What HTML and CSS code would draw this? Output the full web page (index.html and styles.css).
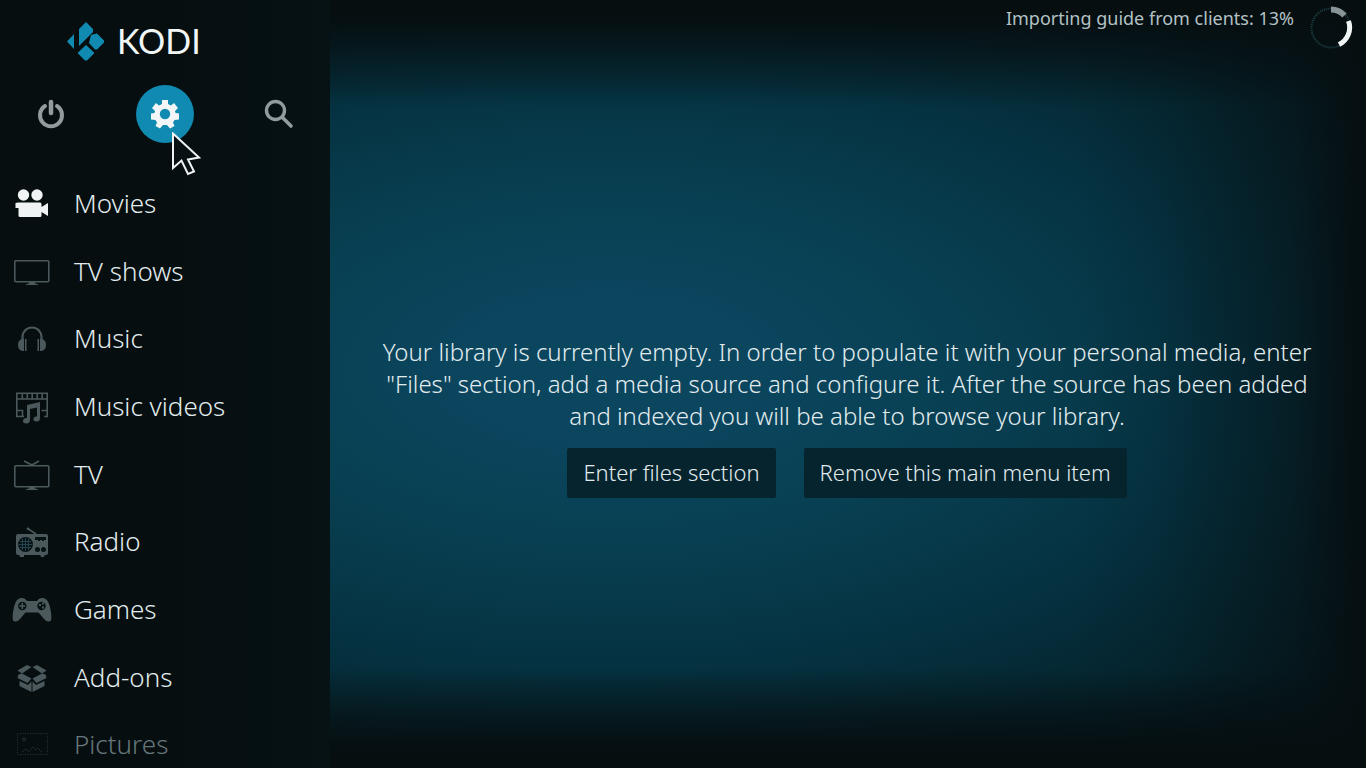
FILE: index.html
```html
<!DOCTYPE html>
<html lang="en">
<head>
<meta charset="utf-8">
<title>Kodi</title>
<link rel="stylesheet" href="styles.css">
</head>
<body>
<div class="app">
  <aside class="sidebar">
    <header class="brand">
      <svg class="brand-mark" viewBox="0 0 38 40" aria-hidden="true">
        <path d="M19 1l7 7v3L12 25V8zM7 13v15L0 20.500zM24 14l6-1.500 7 7v2l-7 7h-2l-6-6.500zM19 24l8 7.500v1L20 39.500h-2L11 32.500v-1z"/>
      </svg>
      <span class="brand-name">KODI</span>
    </header>
    <div class="actions">
      <button class="action" type="button" aria-label="Power">
        <svg viewBox="0 0 30 30" fill="none" stroke="currentColor" stroke-linecap="round">
          <path d="M15 3v11" stroke-width="4.500"/>
          <path d="M9 7A11 11 0 1 0 21 7" stroke-width="4"/>
        </svg>
      </button>
      <button class="action action-active" type="button" aria-label="Settings">
        <svg viewBox="0 0 30 30">
          <path fill="currentColor" fill-rule="evenodd" d="M12 1h6v4l3 1.500L24 4l4 5-3 3 .5 2 3.500.500v6l-4.500.500-1.500 2.500 1.500 3.500-4.500 2.500-3-3.500h-4l-3 3.500L5.500 27 7 23.500 5.500 21 1 20.500v-6l3.500-.500.5-2L2 9l4-5 3 2.500L12 5zM15 9.800a5.200 5.200 0 1 0 0 10.400a5.200 5.200 0 0 0 0-10.400z"/>
        </svg>
      </button>
      <button class="action" type="button" aria-label="Search">
        <svg viewBox="0 0 30 30" fill="none" stroke="currentColor" stroke-linecap="round">
          <circle cx="11.500" cy="11.500" r="9" stroke-width="3.400"/>
          <path d="M18.500 18.500l8.500 8.500" stroke-width="3.600"/>
        </svg>
      </button>
      <svg class="pointer" viewBox="0 0 30 44" aria-hidden="true">
        <path d="M2 1.500V36l8.500-7.500L17 42l6-2.500-6-12 11-2z"/>
      </svg>
    </div>
    <nav class="menu" aria-label="Main menu">
      <a class="menu-item menu-item-selected" href="#movies">
        <svg class="menu-icon" viewBox="0 0 40 40" fill="currentColor"><circle cx="11.500" cy="12" r="5.700"/><circle cx="25" cy="12" r="5.700"/><path d="M6 19.500h22q1.500 0 1.500 2V24l6.500-4v13l-6.500-4v3.500q0 1.500-1.500 1.500H8q-1.500 0-1.500-1.500V25H3.500v-5z"/></svg>
        <span>Movies</span>
      </a>
      <a class="menu-item" href="#tvshows">
        <svg class="menu-icon" viewBox="0 0 40 40"><rect x="2.800" y="9.800" width="34" height="21" rx="1" fill="none" stroke="currentColor" stroke-width="1.600"/><path fill="currentColor" d="M17 31h6v1.500l3 .8V34H14v-.7l3-.8z"/></svg>
        <span>TV shows</span>
      </a>
      <a class="menu-item" href="#music">
        <svg class="menu-icon" viewBox="0 -1 40 40"><path d="M10.500 23v-5a9.500 9.500 0 0 1 19 0v5" fill="none" stroke="currentColor" stroke-width="2.200"/><path fill="currentColor" d="M12 19.500v12.500q-6 0-6-6t6-6.500zM13 20h1.500v12H13zM28 19.500v12.500q6 0 6-6t-6-6.500zM25.500 20H27v12h-1.500z"/></svg>
        <span>Music</span>
      </a>
      <a class="menu-item" href="#musicvideos">
        <svg class="menu-icon" viewBox="0 -1 40 40"><path d="M12 29.500H4.800V6.300h30.400v23.200h-3M4.800 12h30.400M10.300 6.300V12M15.300 6.300V12M20.200 6.300V12M25.200 6.300V12M30.200 6.300V12M5 23.500h5.500v5.500M35 23.500h-5.500" fill="none" stroke="currentColor" stroke-width="1.600"/><path fill="currentColor" d="M15 18l13-3v16q0 3.500-3.500 3.500t-3-3q.5-2.500 3.500-2v-9l-7 1.600v10.400q0 4-3.700 4T11 33.500q.5-3 4-2.500z"/></svg>
        <span>Music videos</span>
      </a>
      <a class="menu-item" href="#tv">
        <svg class="menu-icon" viewBox="0 -1 40 40"><rect x="2.800" y="10.800" width="34" height="21" rx="1" fill="none" stroke="currentColor" stroke-width="1.600"/><path d="M20 10l-8-4M20 10l7-4" fill="none" stroke="currentColor" stroke-width="1.600"/><path fill="currentColor" d="M17 32h6v1.500l3 .8V35H14v-.7l3-.8z"/></svg>
        <span>TV</span>
      </a>
      <a class="menu-item" href="#radio">
        <svg class="menu-icon" viewBox="0 -1 40 40"><path d="M24 12L15.500 6.500" stroke="currentColor" stroke-width="1.500"/><circle cx="16" cy="6.800" r="1.400" fill="currentColor"/><rect x="4" y="12" width="32" height="21" rx="2" fill="currentColor"/><path d="M7 32h5v3H8zM28 32h5l-1 3h-3z" fill="currentColor"/><circle cx="13.500" cy="22.500" r="7.500" class="cut"/><path class="cut" d="M23 15h11v3h-2v1h-2v-1h-2v1h-2v-1h-3z"/><circle cx="25.500" cy="27.500" r="2.500" class="cut"/><circle cx="31.500" cy="27.500" r="2.500" class="cut"/><path class="mesh" d="M8 19.500h11M6.500 22.500h14M8 25.500h11M10.500 17v11M13.500 16v13M16.500 17v11"/></svg>
        <span>Radio</span>
      </a>
      <a class="menu-item" href="#games">
        <svg class="menu-icon" viewBox="0 -1 40 40"><path fill="currentColor" d="M9 8q4-.5 6 3h10q2-3.500 6-3 5 .5 7 9 2.500 12 .5 14-3.500 1.500-6-1.500l-6-7H13.500l-6 7Q5 32.500 1.500 31q-2-2 .5-14Q4 8.500 9 8z"/><circle cx="10.300" cy="16" r="4.200" class="cut"/><path d="M10.300 13v6M7.300 16h6" stroke="currentColor" stroke-width="1.600"/><circle cx="29.500" cy="16" r="4.200" class="cut"/><path fill="currentColor" d="M27 14h2v2h-2zM30 12.500h2v2h-2zM30 16.500h2v2h-2z"/></svg>
        <span>Games</span>
      </a>
      <a class="menu-item" href="#addons">
        <svg class="menu-icon" viewBox="0 -1 40 40" fill="currentColor"><path d="M5.500 12.500L15 7l4.500 2-9.500 6.500zM34.500 12.500L25 7l-4.500 2 9.500 6.500zM6.500 16.500L10 15.500l9.500 5L15.500 25 5.500 20zM33.500 16.500L30 15.500l-9.500 5L24.500 25l10-5zM7.500 23l8.500 4 3.500-3.500V34l-12-6zM32.500 23L24 27l-3.500-3.500V34l12-6z"/></svg>
        <span>Add-ons</span>
      </a>
      <a class="menu-item menu-item-fading" href="#pictures">
        <svg class="menu-icon" viewBox="0 -1 40 40" fill="none" stroke="currentColor"><rect x="5.500" y="8.500" width="30" height="21" stroke-dasharray="1 1.500"/><circle cx="12" cy="14.500" r="1.500"/><path d="M10 27l4-3 3 3 4-5 3 3 2-2 4 4" stroke-dasharray="2 1"/></svg>
        <span>Pictures</span>
      </a>
    </nav>
  </aside>
  <main class="content">
    <div class="status" role="status">
      <span class="status-text">Importing guide from clients: 13%</span>
      <svg class="spinner" viewBox="0 0 44 44" fill="none" aria-hidden="true">
        <circle class="spinner-track" cx="22" cy="22" r="19.500"/>
        <path class="spinner-tail" d="M22 3.500a18.500 18.500 0 0 1 13.500 6"/>
        <path class="spinner-head" d="M39.500 15A19 19 0 0 1 30 38.500"/>
      </svg>
    </div>
    <section class="empty">
      <p class="empty-text">Your library is currently empty. In order to populate it with your personal media, enter "Files" section, add a media source and configure it. After the source has been added and indexed you will be able to browse your library.</p>
      <div class="empty-actions">
        <button class="box-button" type="button">Enter files section</button>
        <button class="box-button" type="button">Remove this main menu item</button>
      </div>
    </section>
  </main>
</div>
</body>
</html>
```

FILE: styles.css
```css
* {
  box-sizing: border-box;
}

body {
  margin: 0;
  background: #060e10;
  color: #e2ecee;
  font-family: "Noto Sans", sans-serif;
}

button {
  border: 0;
  font: inherit;
  color: inherit;
}

.app {
  display: grid;
  grid-template-columns: 330px 1fr;
  height: 100vh;
  min-height: 640px;
  overflow: hidden;
}

.sidebar {
  display: flex;
  flex-direction: column;
  min-height: 0;
  background: linear-gradient(90deg, #060e10 50%, #061214);
}

.brand {
  display: flex;
  align-items: center;
  gap: 12px;
  height: 81px;
  padding-left: 67px;
}

.brand-mark {
  width: 38px;
  height: 40px;
  fill: #118ab2;
}

.brand-name {
  font-family: Lato, sans-serif;
  font-size: 34px;
  line-height: 40px;
  color: #f2f6f7;
}

.actions {
  position: relative;
  display: flex;
  justify-content: space-between;
  padding: 4px 22px 0;
  height: 88px;
}

.action {
  display: grid;
  place-items: center;
  width: 58px;
  height: 58px;
  padding: 0;
  border-radius: 50%;
  background: none;
  color: #929b9d;
}

.action svg {
  width: 30px;
  height: 30px;
}

.action-active {
  background: #108ab0;
  color: #f2f6f7;
}

.pointer {
  position: absolute;
  left: 171px;
  top: 51px;
  width: 30px;
  height: 44px;
  fill: #071114;
  stroke: #eef2f3;
  stroke-width: 2;
}

.menu {
  display: flex;
  flex: 1;
  flex-direction: column;
  margin-bottom: -10px;
}

.menu-item {
  display: flex;
  flex: 1;
  align-items: center;
  gap: 22px;
  padding-left: 12px;
  color: #e2ecee;
  font-size: 26px;
  font-weight: 300;
  line-height: 36px;
  text-decoration: none;
}

.menu-icon {
  width: 40px;
  height: 40px;
  color: #4b585c;
}

.menu-item-selected .menu-icon {
  color: #f0f3f4;
}

.menu-item-fading {
  color: #66777c;
}

.menu-item-fading .menu-icon {
  color: #26343a;
}

.cut {
  fill: #071114;
}

.mesh {
  fill: none;
  stroke: #23454f;
  stroke-width: 1;
}

.content {
  display: flex;
  flex-direction: column;
  background:
    linear-gradient(180deg, #060e10 2%, rgba(6, 14, 16, 0.6) 7%, rgba(6, 14, 16, 0) 14%),
    linear-gradient(0deg, #060e10 2%, rgba(6, 14, 16, 0.6) 7%, rgba(6, 14, 16, 0) 13%),
    linear-gradient(270deg, #060e10 0%, rgba(6, 14, 16, 0.5) 7%, rgba(6, 14, 16, 0.1) 20%, rgba(6, 14, 16, 0) 28%),
    radial-gradient(ellipse 960px 460px at 27% 48%, #0b465f 0%, #0b455e 16%, #094256 30%, #073b4c 48%, #053140 66%, #052833 82%, #041f27 100%);
}

.status {
  display: flex;
  justify-content: flex-end;
  gap: 15px;
  height: 86px;
  padding: 6px 13px 0 0;
}

.status-text {
  font-size: 18px;
  line-height: 25px;
  color: #b3c1c5;
}

.spinner {
  width: 44px;
  height: 44px;
}

.spinner-track {
  stroke: #1d4347;
  stroke-width: 2;
  stroke-dasharray: 1 1;
}

.spinner-tail {
  stroke: #899498;
  stroke-width: 6;
}

.spinner-head {
  stroke: #f1f4f5;
  stroke-width: 5;
}

.empty {
  display: flex;
  flex: 1;
  flex-direction: column;
  align-items: center;
  justify-content: center;
  gap: 16px;
  padding: 0 47px 21px 45px;
  font-weight: 300;
}

.empty-text {
  margin: 0;
  font-size: 24px;
  line-height: 32px;
  text-align: center;
}

.empty-actions {
  display: flex;
  gap: 28px;
}

.box-button {
  height: 50px;
  padding: 0 16px 2px;
  border-radius: 2px;
  background: #06242e;
  font-size: 22px;
  line-height: 30px;
}
```
